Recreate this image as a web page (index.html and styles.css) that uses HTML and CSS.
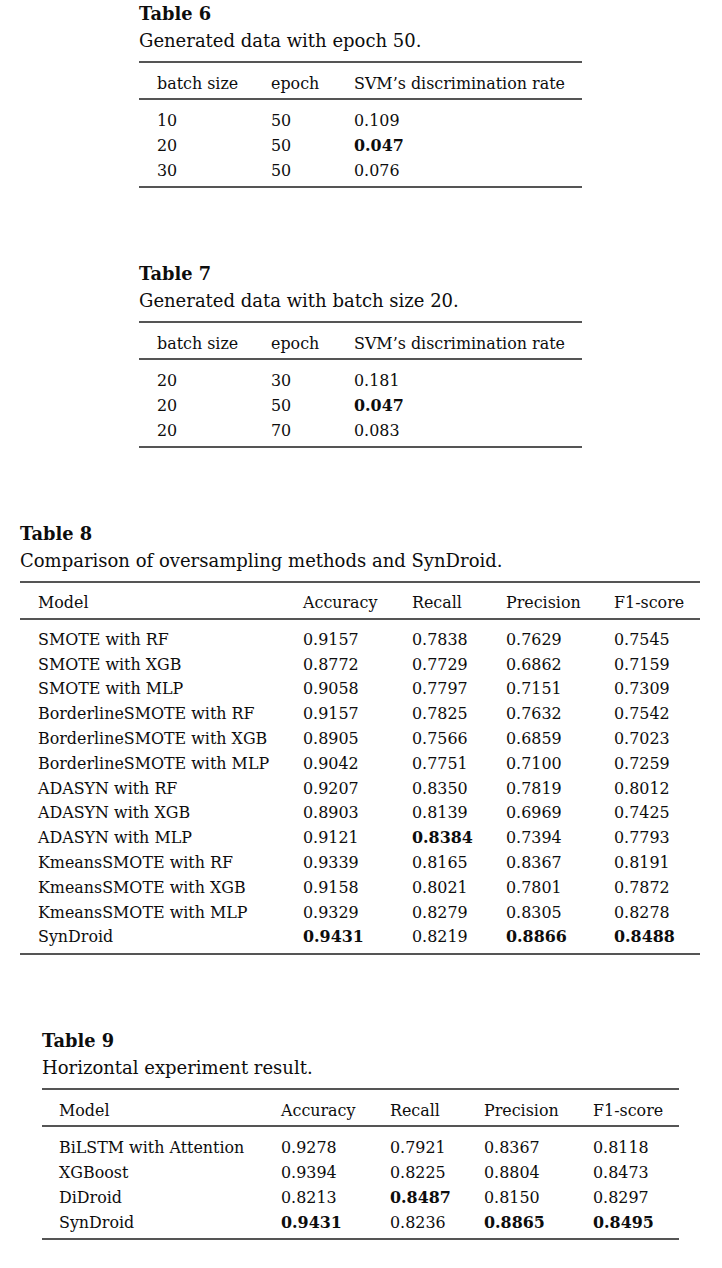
FILE: index.html
```html
<!DOCTYPE html>
<html lang="en">
<head>
<meta charset="utf-8">
<title>Tables 6–9</title>
<link rel="stylesheet" href="styles.css">
</head>
<body>
<section class="block b6">
  <div class="label">Table 6</div>
  <div class="caption">Generated data with epoch 50.</div>
  <table class="tbl">
    <colgroup><col class="w6a"><col class="w6b"><col></colgroup>
    <thead><tr><th>batch size</th><th>epoch</th><th>SVM’s discrimination rate</th></tr></thead>
    <tbody>
      <tr><td>10</td><td>50</td><td>0.109</td></tr>
      <tr><td>20</td><td>50</td><td><b>0.047</b></td></tr>
      <tr><td>30</td><td>50</td><td>0.076</td></tr>
    </tbody>
  </table>
</section>

<section class="block b6 gap">
  <div class="label">Table 7</div>
  <div class="caption">Generated data with batch size 20.</div>
  <table class="tbl">
    <colgroup><col class="w6a"><col class="w6b"><col></colgroup>
    <thead><tr><th>batch size</th><th>epoch</th><th>SVM’s discrimination rate</th></tr></thead>
    <tbody>
      <tr><td>20</td><td>30</td><td>0.181</td></tr>
      <tr><td>20</td><td>50</td><td><b>0.047</b></td></tr>
      <tr><td>20</td><td>70</td><td>0.083</td></tr>
    </tbody>
  </table>
</section>

<section class="block b8 gap">
  <div class="label">Table 8</div>
  <div class="caption">Comparison of oversampling methods and SynDroid.</div>
  <table class="tbl dense">
    <colgroup><col class="w8a"><col class="w8b"><col class="w8c"><col class="w8d"><col></colgroup>
    <thead><tr><th>Model</th><th>Accuracy</th><th>Recall</th><th>Precision</th><th>F1-score</th></tr></thead>
    <tbody>
      <tr><td>SMOTE with RF</td><td>0.9157</td><td>0.7838</td><td>0.7629</td><td>0.7545</td></tr>
      <tr><td>SMOTE with XGB</td><td>0.8772</td><td>0.7729</td><td>0.6862</td><td>0.7159</td></tr>
      <tr><td>SMOTE with MLP</td><td>0.9058</td><td>0.7797</td><td>0.7151</td><td>0.7309</td></tr>
      <tr><td>BorderlineSMOTE with RF</td><td>0.9157</td><td>0.7825</td><td>0.7632</td><td>0.7542</td></tr>
      <tr><td>BorderlineSMOTE with XGB</td><td>0.8905</td><td>0.7566</td><td>0.6859</td><td>0.7023</td></tr>
      <tr><td>BorderlineSMOTE with MLP</td><td>0.9042</td><td>0.7751</td><td>0.7100</td><td>0.7259</td></tr>
      <tr><td>ADASYN with RF</td><td>0.9207</td><td>0.8350</td><td>0.7819</td><td>0.8012</td></tr>
      <tr><td>ADASYN with XGB</td><td>0.8903</td><td>0.8139</td><td>0.6969</td><td>0.7425</td></tr>
      <tr><td>ADASYN with MLP</td><td>0.9121</td><td><b>0.8384</b></td><td>0.7394</td><td>0.7793</td></tr>
      <tr><td>KmeansSMOTE with RF</td><td>0.9339</td><td>0.8165</td><td>0.8367</td><td>0.8191</td></tr>
      <tr><td>KmeansSMOTE with XGB</td><td>0.9158</td><td>0.8021</td><td>0.7801</td><td>0.7872</td></tr>
      <tr><td>KmeansSMOTE with MLP</td><td>0.9329</td><td>0.8279</td><td>0.8305</td><td>0.8278</td></tr>
      <tr><td>SynDroid</td><td><b>0.9431</b></td><td>0.8219</td><td><b>0.8866</b></td><td><b>0.8488</b></td></tr>
    </tbody>
  </table>
</section>

<section class="block b9 gap">
  <div class="label">Table 9</div>
  <div class="caption">Horizontal experiment result.</div>
  <table class="tbl t9">
    <colgroup><col class="w9a"><col class="w9b"><col class="w9c"><col class="w9d"><col></colgroup>
    <thead><tr><th>Model</th><th>Accuracy</th><th>Recall</th><th>Precision</th><th>F1-score</th></tr></thead>
    <tbody>
      <tr><td>BiLSTM with Attention</td><td>0.9278</td><td>0.7921</td><td>0.8367</td><td>0.8118</td></tr>
      <tr><td>XGBoost</td><td>0.9394</td><td>0.8225</td><td>0.8804</td><td>0.8473</td></tr>
      <tr><td>DiDroid</td><td>0.8213</td><td><b>0.8487</b></td><td>0.8150</td><td>0.8297</td></tr>
      <tr><td>SynDroid</td><td><b>0.9431</b></td><td>0.8236</td><td><b>0.8865</b></td><td><b>0.8495</b></td></tr>
    </tbody>
  </table>
</section>
</body>
</html>
```

FILE: styles.css
```css
html, body {
  margin: 0;
  padding: 0;
  background: #ffffff;
}

body {
  font-family: "DejaVu Serif", "Liberation Serif", serif;
  color: #0d0d0d;
}

.block {
  display: block;
}

.gap {
  margin-top: 72px;
}

.b6 {
  margin-left: 139px;
  width: 443px;
}

.b8 {
  margin-left: 20px;
  width: 680px;
}

.b9 {
  margin-left: 42px;
  width: 637px;
}

.label {
  font-weight: bold;
  font-size: 17.8px;
  line-height: 27px;
}

.caption {
  font-size: 18px;
  line-height: 27px;
}

.tbl {
  margin-top: 7px;
  width: 100%;
  border-collapse: collapse;
  table-layout: fixed;
  border-top: 2px solid #555;
  border-bottom: 2px solid #555;
  font-size: 15.9px;
  line-height: 25px;
}

.tbl th,
.tbl td {
  padding: 0 0 0 18px;
  text-align: left;
  font-weight: normal;
  white-space: nowrap;
  vertical-align: baseline;
}

.t9 th,
.t9 td {
  padding-left: 17px;
}

.tbl b {
  font-weight: bold;
  line-height: 1;
}

.tbl thead th {
  padding-top: 8px;
  padding-bottom: 2px;
  border-bottom: 2px solid #555;
}

.tbl tbody tr:first-child td {
  padding-top: 8px;
}

.tbl tbody tr:last-child td {
  padding-bottom: 3px;
}

.dense {
  line-height: 24.8px;
}

.w6a { width: 114px; }
.w6b { width: 83px; }

.w8a { width: 265px; }
.w8b { width: 109px; }
.w8c { width: 94px; }
.w8d { width: 108px; }

.w9a { width: 222px; }
.w9b { width: 109px; }
.w9c { width: 94px; }
.w9d { width: 109px; }
```
